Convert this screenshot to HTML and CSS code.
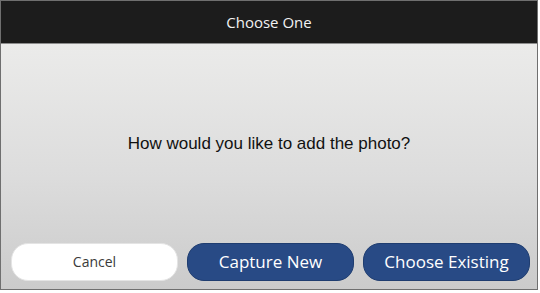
FILE: index.html
```html
<!DOCTYPE html>
<html>
<head>
<meta charset="utf-8">
<link rel="stylesheet" href="styles.css">
</head>
<body>
<div class="dialog">
  <div class="header">Choose One</div>
  <div class="content">
    <div class="question">How would you like to add the photo?</div>
    <div class="actions">
      <button class="btn btn-light">Cancel</button>
      <button class="btn btn-primary">Capture New</button>
      <button class="btn btn-primary">Choose Existing</button>
    </div>
  </div>
</div>
</body>
</html>
```
FILE: styles.css
```css
html, body {
  margin: 0;
  padding: 0;
  background: #ffffff;
}
.dialog {
  box-sizing: border-box;
  width: 538px;
  height: 290px;
  border: 1px solid #6f6f6f;
  display: flex;
  flex-direction: column;
}
.header {
  height: 42px;
  flex: 0 0 auto;
  background: #1c1c1c;
  border-bottom: 1px solid #8c8c8c;
  color: #f2f2f2;
  font-family: "Open Sans", sans-serif;
  font-size: 15px;
  display: flex;
  align-items: center;
  justify-content: center;
}
.content {
  flex: 1;
  display: flex;
  flex-direction: column;
  background: linear-gradient(to bottom, #ebebea 0%, #dcdcdc 55%, #cbcbcb 100%);
}
.question {
  flex: 1;
  display: flex;
  align-items: center;
  justify-content: center;
  padding-top: 1px;
  font-family: "Liberation Sans", Arial, sans-serif;
  font-size: 17px;
  color: #111111;
}
.actions {
  display: flex;
  gap: 9px;
  padding: 0 7px 8px 10px;
}
.btn {
  flex: 1;
  height: 38px;
  border-radius: 17px;
  font-family: "Open Sans", sans-serif;
  padding: 0 0 2px 0;
  cursor: pointer;
}
.btn-light {
  background: #ffffff;
  border: 1px solid #e4e4e4;
  color: #3a3a3a;
  font-size: 14px;
}
.btn-primary {
  background: #284a85;
  border: 1px solid #1f3d70;
  color: #ffffff;
  font-size: 17px;
}
```
